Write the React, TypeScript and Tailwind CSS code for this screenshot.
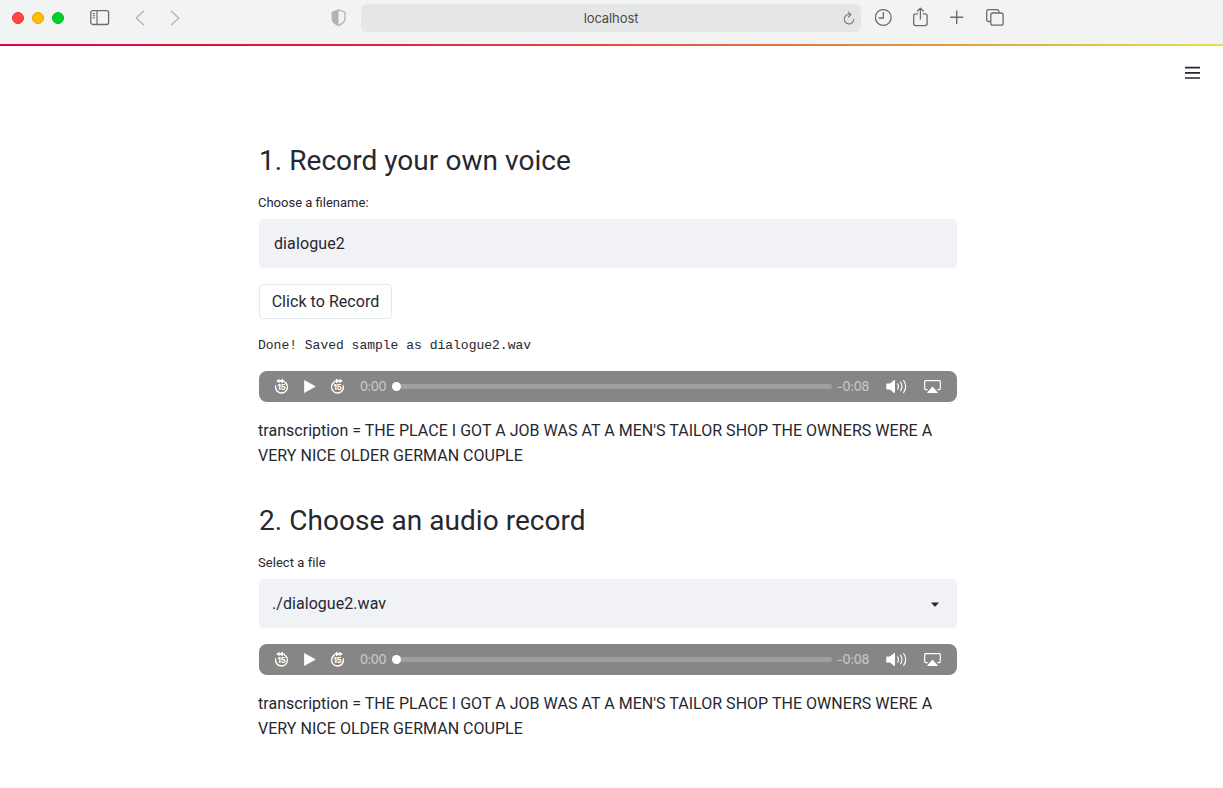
import type { ReactNode } from "react";

function SkipIcon({ forward = false }: { forward?: boolean }) {
  return (
    <svg width="16" height="18" viewBox="0 0 16 18" fill="none" className="shrink-0">
      <g transform={forward ? "translate(15 0) scale(-1 1)" : undefined}>
        <path d="M1.600 7.900A6 6 0 1 0 13.200 7.200Q12.700 5.300 10.700 4.100" stroke="white" strokeWidth="1.400" strokeLinecap="round" />
        <path d="M2.100 3 5.600.700v1.700L9 .700v1.600h1.500v1.400H9v1.600L5.600 3.600v1.700Z" fill="white" />
      </g>
      <text x="7.500" y="11.500" textAnchor="middle" fill="white" fontSize="7.500" fontWeight="800" fontFamily="Inter, sans-serif">
        15
      </text>
    </svg>
  );
}

function AudioPlayer() {
  return (
    <div className="mt-[15px] flex h-[31px] items-center rounded-lg bg-[#868686] pl-[15px] pr-4">
      <SkipIcon />
      <svg width="12" height="14" viewBox="0 0 12 14" className="ml-[14px] shrink-0">
        <path d="M.3.400v12.200L11.300 6.500Z" fill="white" stroke="white" strokeWidth=".700" strokeLinejoin="round" />
      </svg>
      <div className="ml-[14px] flex">
        <SkipIcon forward />
      </div>
      <span className="ml-[14px] w-8 whitespace-nowrap pt-0.5 font-['Inter'] text-[12.500px] font-medium leading-none tracking-[-0.500px] text-[#c3c3c3]">0:00</span>
      <div className="flex h-[9px] flex-1 items-center">
        <span className="size-[9px] rounded-full bg-white" />
        <span className="h-[5px] flex-1 rounded-r-sm bg-[#a0a0a0]" />
      </div>
      <span className="ml-[5px] w-[49px] whitespace-nowrap pt-0.5 font-['Inter'] text-[12.500px] font-medium leading-none tracking-[-0.300px] text-[#c3c3c3]">-0:08</span>
      <svg width="22" height="16" viewBox="0 0 22 16" fill="none" className="shrink-0">
        <path d="M.3 5.100q0-.6.6-.6H4l4.200-3.400q.8-.5.8.4v12q0 .9-.8.4L4 10.500H.9q-.6 0-.6-.6Z" fill="white" />
        <path d="M11.700 4.900q1.500 2.600 0 5.200M14.600 3.200q2.700 4.300 0 8.600M17.700 1.500q3.900 6 0 12" stroke="white" strokeWidth="1.200" strokeLinecap="round" />
      </svg>
      <svg width="17" height="14" viewBox="0 0 17 14" fill="none" className="ml-[16px] shrink-0">
        <path d="M3.600 9.600H1.700Q.7 9.600.7 8.600V1.700q0-1 1-1h13.600q1 0 1 1v6.900q0 1-1 1h-1.900" stroke="white" strokeWidth="1.200" />
        <path d="m8.500 6.600 5.300 5.800q.2.500-.4.500H3.600q-.6 0-.4-.5Z" fill="white" />
      </svg>
    </div>
  );
}

function Heading({ children }: { children: ReactNode }) {
  return <h2 className="h-10 whitespace-nowrap text-[28px] leading-[42px] tracking-[0.050px]">{children}</h2>;
}

function Transcription() {
  return (
    <p className="mt-4 -ml-px whitespace-nowrap text-[16px] leading-[25px] tracking-[0.030px]">
      transcription = THE PLACE I GOT A JOB WAS AT A MEN'S TAILOR SHOP THE OWNERS WERE A
      <br />
      VERY NICE OLDER GERMAN COUPLE
    </p>
  );
}

function BrowserBar() {
  return (
    <header className="flex h-11 items-start bg-[#f2f4f3] pl-3 text-[#6b6d6c]">
      <div className="mt-3 flex gap-2">
        <i className="size-3 rounded-full border border-[#e9342f] bg-[#ff4942]" />
        <i className="size-3 rounded-full border border-[#e6a400] bg-[#ffbd00]" />
        <i className="size-3 rounded-full border border-[#00be22] bg-[#00d02d]" />
      </div>
      <svg width="20" height="16" viewBox="0 0 20 16" fill="none" className="ml-[26px] mt-[10px]" stroke="currentColor">
        <rect x=".8" y=".7" width="17.8" height="13.8" rx="2" strokeWidth="1.3" />
        <path d="M7 1v13.5" strokeWidth="1.2" />
        <path d="M2.7 3.5H5M2.7 5.7H5M2.7 7.9H5" strokeWidth="1" />
      </svg>
      <svg width="10" height="16" viewBox="0 0 10 16" fill="none" className="ml-[25px] mt-[10px]" stroke="#b5b7b6" strokeWidth="1.5" strokeLinecap="round" strokeLinejoin="round">
        <path d="M8.500 1.300 1.200 8l7.300 6.700" />
      </svg>
      <svg width="10" height="16" viewBox="0 0 10 16" fill="none" className="ml-[25px] mt-[10px]" stroke="#b5b7b6" strokeWidth="1.5" strokeLinecap="round" strokeLinejoin="round">
        <path d="M1.500 1.300 8.800 8l-7.300 6.700" />
      </svg>
      <svg width="15" height="18" viewBox="0 0 15 18" fill="none" className="ml-[151px] mt-[9px]">
        <path d="M7.500.9 13.500 3q.5.2.5.8v6.300c0 3.200-3 5-6.500 6.500C4 15.100 1.200 13.300 1.200 10.100V3.800q0-.6.5-.8Z" stroke="#b2b4b3" strokeWidth="1.300" />
        <path d="M7.500.9 1.700 3q-.5.200-.5.800v6.300c0 3.200 2.800 5 6.300 6.500Z" fill="#b2b4b3" />
      </svg>
      <div className="ml-[15px] mt-1 flex h-7 w-[500px] items-center rounded-md bg-[#e5e7e6]">
        <span className="w-[500px] pl-[18px] pt-px text-center font-['Inter'] text-[13px] leading-none tracking-[-0.100px] text-[#4a4c4b]">localhost</span>
        <svg width="12" height="14" viewBox="0 0 12 14" fill="none" className="mr-[6px] shrink-0" stroke="#777978" strokeWidth="1.1" strokeLinecap="round" strokeLinejoin="round">
          <path d="M7.600 3.600A4.800 4.800 0 1 0 10.800 8.200M5.300 1.200 7.900 3.700 5.400 6.200" />
        </svg>
      </div>
      <svg width="18" height="18" viewBox="0 0 18 18" fill="none" className="ml-[14px] mt-[9px]" stroke="currentColor" strokeWidth="1.300" strokeLinecap="round">
        <circle cx="8.300" cy="8.500" r="7.900" />
        <path d="M8.300 3.600V9H4.100" />
      </svg>
      <svg width="16" height="20" viewBox="0 0 16 20" fill="none" className="ml-[20px] mt-[7px]" stroke="currentColor" strokeWidth="1.300" strokeLinecap="round" strokeLinejoin="round">
        <path d="M4.700 6.800H2.700q-2 0-2 2v7.800q0 2 2 2h9.400q2 0 2-2V8.800q0-2-2-2h-2M7.400 12V1.200M4.400 4l3-2.900 3 2.900" />
      </svg>
      <svg width="14" height="14" viewBox="0 0 14 14" fill="none" className="ml-[21px] mt-[10px]" stroke="currentColor" strokeWidth="1.400" strokeLinecap="round">
        <path d="M6.700 1v13M.7 7.300h12" />
      </svg>
      <svg width="19" height="18" viewBox="0 0 19 18" fill="none" className="ml-[22px] mt-[9px]" stroke="currentColor" strokeWidth="1.300">
        <path d="M4.600 12.500H2.800q-2.100 0-2.100-2.100V2.700Q.7.600 2.800.6h8q2.100 0 2.100 2.100v1" />
        <rect x="4.800" y="4" width="12.300" height="12.200" rx="2" />
      </svg>
    </header>
  );
}

export default function App() {
  return (
    <div className="h-[788px] w-[1223px] overflow-hidden bg-white font-['Roboto','Noto_Sans',sans-serif] text-[#262730]">
      <BrowserBar />
      <div className="h-0.5 bg-[linear-gradient(90deg,#df0645_0%,#df1743_25%,#df4f46_50%,#e09642_75%,#e8e04c_100%)]" />
      <div className="flex h-[94px] justify-end pr-[23px] pt-[20px]">
        <svg width="15" height="15" viewBox="0 0 15 15" stroke="#262730" strokeWidth="1.700">
          <path d="M0 1.700h15M0 6.800h15M0 12h15" />
        </svg>
      </div>
      <main className="ml-[259px] w-[698px]">
        <section>
          <Heading>1. Record your own voice</Heading>
          <label className="-ml-px mt-[13px] block h-5 text-[13px] leading-5">Choose a filename:</label>
          <div className="mt-[6px] flex h-[49px] items-center rounded bg-[#f0f2f6] pl-[15px] text-[16px] tracking-[0.100px]">dialogue2</div>
          <button className="mt-4 flex h-[35px] w-[133px] items-center justify-center whitespace-nowrap rounded border border-[#e4e8f0] text-[16px] tracking-[0.050px]">
            Click to Record
          </button>
          <pre className="-ml-px mt-[17px] h-5 font-['Liberation_Mono',monospace] text-[13px] leading-5">Done! Saved sample as dialogue2.wav</pre>
          <AudioPlayer />
          <Transcription />
        </section>
        <section className="mt-8">
          <Heading>2. Choose an audio record</Heading>
          <label className="-ml-px mt-[13px] block h-5 text-[13px] leading-5 tracking-[0.050px]">Select a file</label>
          <div className="mb-4 mt-[6px] flex h-[49px] items-center justify-between rounded bg-[#f0f2f6] pl-[13px] pr-[18px] text-[16px] tracking-[0.050px]">
            ./dialogue2.wav
            <svg width="8" height="5" viewBox="0 0 8 5" className="mt-px">
              <path d="M0 .5h8L4.600 4.200q-.6.5-1.200 0Z" fill="#262730" />
            </svg>
          </div>
          <AudioPlayer />
          <Transcription />
        </section>
      </main>
    </div>
  );
}
